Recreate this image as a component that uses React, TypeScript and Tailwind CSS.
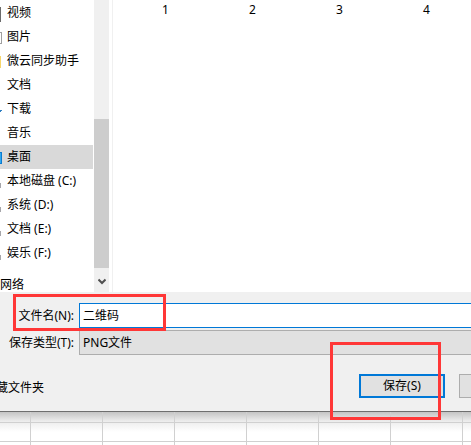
import { useState } from 'react';

const folders = [
  { name: '视频', icon: 'video' },
  { name: '图片', icon: 'picture' },
  { name: '微云同步助手', icon: 'folder' },
  { name: '文档', icon: '' },
  { name: '下载', icon: 'download' },
  { name: '音乐', icon: '' },
  { name: '桌面', icon: 'desktop' },
  { name: '本地磁盘 (C:)', icon: 'disk' },
  { name: '系统 (D:)', icon: 'disk' },
  { name: '文档 (E:)', icon: 'disk' },
  { name: '娱乐 (F:)', icon: 'disk' },
];

const rowHeights = ['h-[11px] border-b', 'h-[19px] border-b', 'h-[3px]'];

// only the right edge of each icon is inside the window
function IconEdge({ type }: { type: string }) {
  return (
    <svg className="w-[7px] h-6 shrink-0" viewBox="0 0 7 24" shapeRendering="crispEdges" aria-hidden="true">
      {type === 'video' && <path d="M0 6h1v15H0z" fill="#6b6b6b" />}
      {type === 'picture' && <path d="M0 7.5h1.5v11H0" fill="none" stroke="#a0a0a0" />}
      {type === 'folder' && <path d="M0 7h1v12H0z" fill="#f7d66b" />}
      {type === 'download' && <path d="M0 13h2v1H1v1H0z" fill="#2f7fc1" />}
      {type === 'desktop' && (
        <>
          <path d="M0 7h2v12H0z" fill="#0b7bd0" />
          <path d="M0 8h1v10H0z" fill="#2ea8f0" />
        </>
      )}
      {type === 'disk' && <path d="M0 14h1v5H0z" fill="#a6a6aa" />}
    </svg>
  );
}

function Sidebar() {
  const [active, setActive] = useState('桌面');
  return (
    <nav className="w-[93px] shrink-0 overflow-hidden pt-px">
      {folders.map((f) => (
        <button key={f.name} onClick={() => setActive(f.name)}
          className={`flex w-full h-6 items-center text-left whitespace-nowrap ${active === f.name ? 'bg-[#d9d9d9]' : ''}`}>
          <IconEdge type={f.icon} />
          {f.name}
        </button>
      ))}
      <button className="mt-2 flex w-full h-[19px] items-start leading-6 text-left">网络</button>
    </nav>
  );
}

function ScrollBar() {
  return (
    <div className="ml-px w-[15px] shrink-0 bg-[#f0f0f0] flex flex-col justify-end">
      <div className="h-[149px] bg-[#cdcdcd]" />
      <button aria-label="向下滚动" className="flex h-6 w-full items-center justify-center pt-1">
        <svg className="w-2 h-2" viewBox="0 0 8 8" fill="none" stroke="#505050" strokeWidth="2">
          <path d="M0.5 1.5L4 5L7.5 1.5" />
        </svg>
      </button>
    </div>
  );
}

export default function App() {
  const [fileName, setFileName] = useState('二维码');
  return (
    <div className="relative overflow-hidden bg-white text-black text-xs font-['Noto_Sans','Noto_Sans_CJK_SC',sans-serif]">
      <div className="bg-[#f0f0f0] border-b border-[#6e6e6e]">
        <div className="flex bg-white">
          <Sidebar />
          <ScrollBar />
          <main className="ml-[3px] flex-1 min-w-0 overflow-hidden border-l border-[#f0f0f0]">
            <div className="flex pl-[9px] pt-0.5">
              {[1, 2, 3, 4].map((n) => (
                <span key={n} className="w-[87px] shrink-0 text-center">{n}</span>
              ))}
            </div>
          </main>
        </div>

        <form onSubmit={(e) => e.preventDefault()} className="pt-[11px] pb-[13px]">
          <div className="flex items-center">
            <label htmlFor="file-name" className="w-[79px] pr-[5px] shrink-0 text-right whitespace-nowrap">文件名(N):</label>
            <input id="file-name" value={fileName} onChange={(e) => setFileName(e.target.value)}
              className="h-[25px] flex-1 min-w-0 bg-white border border-r-0 border-[#0078d7] px-[3px] pb-0.5 outline-none" />
          </div>
          <div className="mt-0.5 flex items-center">
            <label htmlFor="file-type" className="w-[79px] pr-[5px] shrink-0 text-right whitespace-nowrap">保存类型(T):</label>
            <select id="file-type" className="h-[25px] flex-1 min-w-0 appearance-none bg-[#e1e1e1] border border-r-0 border-[#adadad] px-[3px] outline-none">
              <option>PNG文件</option>
            </select>
          </div>
          <div className="mt-[19px] flex items-center justify-between">
            <button type="button" className="flex w-11 justify-end overflow-hidden whitespace-nowrap pt-1">藏文件夹</button>
            <div className="flex gap-3.5">
              <button type="submit" className="h-6 w-[86px] bg-[#e1e1e1] border-2 border-[#0078d7]">保存(S)</button>
              <button type="button" aria-label="取消" className="h-6 w-3 bg-[#e1e1e1] border border-r-0 border-[#adadad]" />
            </div>
          </div>
        </form>
      </div>

      {/* sheet behind the dialog, shaded by its drop shadow */}
      <div className="overflow-hidden bg-linear-to-b from-[#c4c4c4] via-[#ececec] via-[9px] to-white to-[20px]">
        {rowHeights.map((h) => (
          <div key={h} className={`flex border-[#d0d0d0] ${h}`}>
            <div className="w-[31px] shrink-0 border-r border-[#d0d0d0]" />
            {Array.from({ length: 24 }, (_, c) => (
              <div key={c} className="w-[72px] shrink-0 border-r border-[#d0d0d0]" />
            ))}
          </div>
        ))}
      </div>

      {/* highlight frames */}
      <div className="pointer-events-none absolute left-[13px] top-[294px] w-[153px] h-[37px] border-3 border-[#ff3737]" />
      <div className="pointer-events-none absolute left-[330px] top-[342px] w-[111px] h-[78px] border-3 border-[#ff3737]" />
    </div>
  );
}
